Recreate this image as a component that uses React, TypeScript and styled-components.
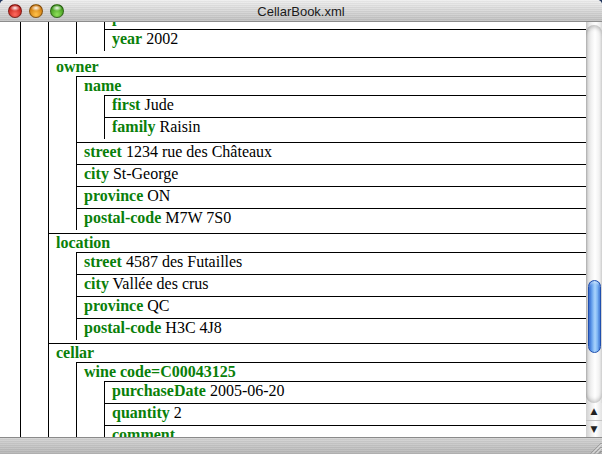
import React, { useLayoutEffect, useRef } from "react";
import styled, { createGlobalStyle } from "styled-components";

type XNode = { tag: string; text?: string; children?: XNode[]; anchor?: boolean; cont?: boolean };

const doc: XNode = {
  tag: "cellar-book",
  cont: true,
  children: [
    {
      tag: "wine-catalog",
      cont: true,
      children: [
        {
          tag: "wine",
          cont: true,
          children: [
            { tag: "price", text: "22.80" },
            { tag: "year", text: "2002", anchor: true },
          ],
        },
      ],
    },
    {
      tag: "owner",
      children: [
        { tag: "name", children: [{ tag: "first", text: "Jude" }, { tag: "family", text: "Raisin" }] },
        { tag: "street", text: "1234 rue des Châteaux" },
        { tag: "city", text: "St-George" },
        { tag: "province", text: "ON" },
        { tag: "postal-code", text: "M7W 7S0" },
      ],
    },
    {
      tag: "location",
      children: [
        { tag: "street", text: "4587 des Futailles" },
        { tag: "city", text: "Vallée des crus" },
        { tag: "province", text: "QC" },
        { tag: "postal-code", text: "H3C 4J8" },
      ],
    },
    {
      tag: "cellar",
      children: [
        {
          tag: "wine code=C00043125",
          children: [
            { tag: "purchaseDate", text: "2005-06-20" },
            { tag: "quantity", text: "2" },
            { tag: "comment" },
          ],
        },
      ],
    },
  ],
};

const GlobalStyle = createGlobalStyle`
  html, body { margin: 0; padding: 0; background: #24385e; }
  #root { width: 602px; height: 454px; }
`;

const Window = styled.div`
  width: 602px;
  height: 454px;
  display: flex;
  flex-direction: column;
  border-radius: 5px 5px 0 0;
  overflow: hidden;
  background: #fff;
`;

const TitleBar = styled.div`
  height: 21px;
  flex: none;
  display: grid;
  grid-template-columns: 1fr auto 1fr;
  align-items: center;
  border-bottom: 1px solid #8d8d8d;
  background:
    repeating-linear-gradient(to bottom, rgba(255,255,255,0.12) 0 1px, rgba(0,0,0,0.03) 1px 2px),
    linear-gradient(to bottom, #eeeeee 0%, #d9d9d9 45%, #bebebe 100%);
`;

const Lights = styled.div`
  display: flex;
  gap: 7px;
  padding-left: 8px;
`;

const Light = styled.span<{ $c: string; $d: string }>`
  width: 14px;
  height: 14px;
  border-radius: 50%;
  box-sizing: border-box;
  border: 1px solid rgba(0, 0, 0, 0.38);
  background:
    radial-gradient(ellipse 5px 3px at 50% 25%, rgba(255,255,255,0.95) 0%, rgba(255,255,255,0) 100%),
    radial-gradient(circle at 50% 78%, ${(p) => p.$c} 0%, ${(p) => p.$d} 85%);
`;

const Title = styled.div`
  font-family: "Liberation Sans", Arial, sans-serif;
  font-size: 13px;
  color: #1a1a1a;
  padding-top: 1px;
`;

const Body = styled.div`
  flex: 1;
  display: flex;
  min-height: 0;
`;

const Viewport = styled.div`
  flex: 1;
  overflow: hidden;
  background: #fff;
`;

const Tree = styled.div`
  margin-left: 20px;
  border-left: 1px solid #000;
  padding-bottom: 200px;
`;

const Box = styled.div<{ $branch: boolean; $cont: boolean }>`
  border-top: ${(p) => (p.$cont ? "none" : "1px solid #000")};
  padding-bottom: ${(p) => (p.$branch ? "3px" : "0")};
`;

const Label = styled.div<{ $leaf: boolean }>`
  padding-left: 7px;
  font-family: "Liberation Serif", "Times New Roman", serif;
  font-size: 16px;
  line-height: ${(p) => (p.$leaf ? "17px" : "18px")};
  padding-bottom: ${(p) => (p.$leaf ? "4px" : "0")};
  white-space: nowrap;
  color: #000;
`;

const Tag = styled.span`
  font-weight: bold;
  color: #0a7f0a;
`;

const Children = styled.div`
  margin-left: 27px;
  border-left: 1px solid #000;
`;

const ScrollColumn = styled.div`
  width: 16px;
  flex: none;
  display: flex;
  flex-direction: column;
  background: linear-gradient(to right, #c4c4c4 0px, #e6e6e6 3px, #f7f7f7 7px, #fdfdfd 10px, #ececec 14px, #d8d8d8 16px);
`;

const Track = styled.div`
  flex: 1;
  margin: 3px 0 0;
  border-radius: 8px;
  display: flex;
  flex-direction: column;
  background: linear-gradient(to right, #b9b9b9 0px, #dcdcdc 2px, #f0f0f0 5px, #ffffff 9px, #f2f2f2 13px, #dedede 16px);
  box-shadow: inset 0 4px 4px -2px rgba(0, 0, 0, 0.25), inset 0 -4px 4px -2px rgba(0, 0, 0, 0.22);
`;

const Thumb = styled.div<{ $top: number; $h: number }>`
  margin: ${(p) => p.$top}px 1px 0 2px;
  height: ${(p) => p.$h}px;
  border-radius: 7px;
  box-sizing: border-box;
  border: 1px solid #1f4fae;
  background:
    linear-gradient(to right, #2a5cc4 0%, #5591e6 18%, #8ec0f6 42%, #a9d3fc 55%, #7ab2f2 78%, #2e6bd2 100%);
  box-shadow: inset 0 2px 2px rgba(255, 255, 255, 0.35);
`;

const ArrowButton = styled.div<{ $up?: boolean }>`
  height: 17px;
  flex: none;
  display: flex;
  align-items: center;
  justify-content: center;
  box-sizing: border-box;
  border-top: ${(p) => (p.$up ? "none" : "1px solid #c2c2c2")};
  background: linear-gradient(to right, #d0d0d0, #f2f2f2 40%, #ffffff 60%, #e2e2e2);
  font-size: 9px;
  color: #222;
  font-family: "DejaVu Sans", sans-serif;
  line-height: 1;
`;

const BottomBar = styled.div`
  height: 16px;
  flex: none;
  display: flex;
  justify-content: flex-end;
  align-items: flex-end;
  border-top: 1px solid #8a8a8a;
  background:
    repeating-linear-gradient(to bottom, rgba(255,255,255,0.1) 0 1px, rgba(0,0,0,0.03) 1px 2px),
    linear-gradient(to bottom, #d2d2d2 0%, #c6c6c6 40%, #b4b4b4 100%);
`;

const Grip = () => (
  <svg width="13" height="13" viewBox="0 0 13 13">
    <g stroke="#7a7a7a" strokeWidth="1">
      <line x1="12.5" y1="2" x2="2" y2="12.5" />
      <line x1="12.5" y1="6" x2="6" y2="12.5" />
      <line x1="12.5" y1="10" x2="10" y2="12.5" />
    </g>
    <g stroke="#f2f2f2" strokeWidth="1">
      <line x1="12.5" y1="3" x2="3" y2="12.5" />
      <line x1="12.5" y1="7" x2="7" y2="12.5" />
    </g>
  </svg>
);

const Element: React.FC<{ node: XNode }> = ({ node }) => {
  const branch = !!node.children;
  const cont = !!node.cont;
  return (
    <Box $branch={branch} $cont={cont} data-anchor={node.anchor ? "1" : undefined}>
      {!cont && (
        <Label $leaf={!branch}>
          <Tag>{node.tag}</Tag>
          {node.text !== undefined ? " " + node.text : null}
        </Label>
      )}
      {branch && (
        <Children>
          {node.children!.map((c, i) => (
            <Element key={i} node={c} />
          ))}
        </Children>
      )}
    </Box>
  );
};

export default function App() {
  const vp = useRef<HTMLDivElement>(null);
  useLayoutEffect(() => {
    const v = vp.current;
    if (!v) return;
    const a = v.querySelector("[data-anchor]") as HTMLElement | null;
    if (!a) return;
    const off = a.getBoundingClientRect().top - v.getBoundingClientRect().top + v.scrollTop;
    v.scrollTop = off - 7;
  }, []);
  return (
    <>
      <GlobalStyle />
      <Window>
        <TitleBar>
          <Lights>
            <Light $c="#ff6a5e" $d="#b8120a" />
            <Light $c="#ffc24a" $d="#c46a00" />
            <Light $c="#8fe05a" $d="#2f8a0e" />
          </Lights>
          <Title>CellarBook.xml</Title>
          <div />
        </TitleBar>
        <Body>
          <Viewport ref={vp}>
            <Tree>
              <Element node={doc} />
            </Tree>
          </Viewport>
          <ScrollColumn>
            <Track>
              <Thumb $top={255} $h={73} />
            </Track>
            <ArrowButton $up>▲</ArrowButton>
            <ArrowButton>▼</ArrowButton>
          </ScrollColumn>
        </Body>
        <BottomBar>
          <Grip />
        </BottomBar>
      </Window>
    </>
  );
}
